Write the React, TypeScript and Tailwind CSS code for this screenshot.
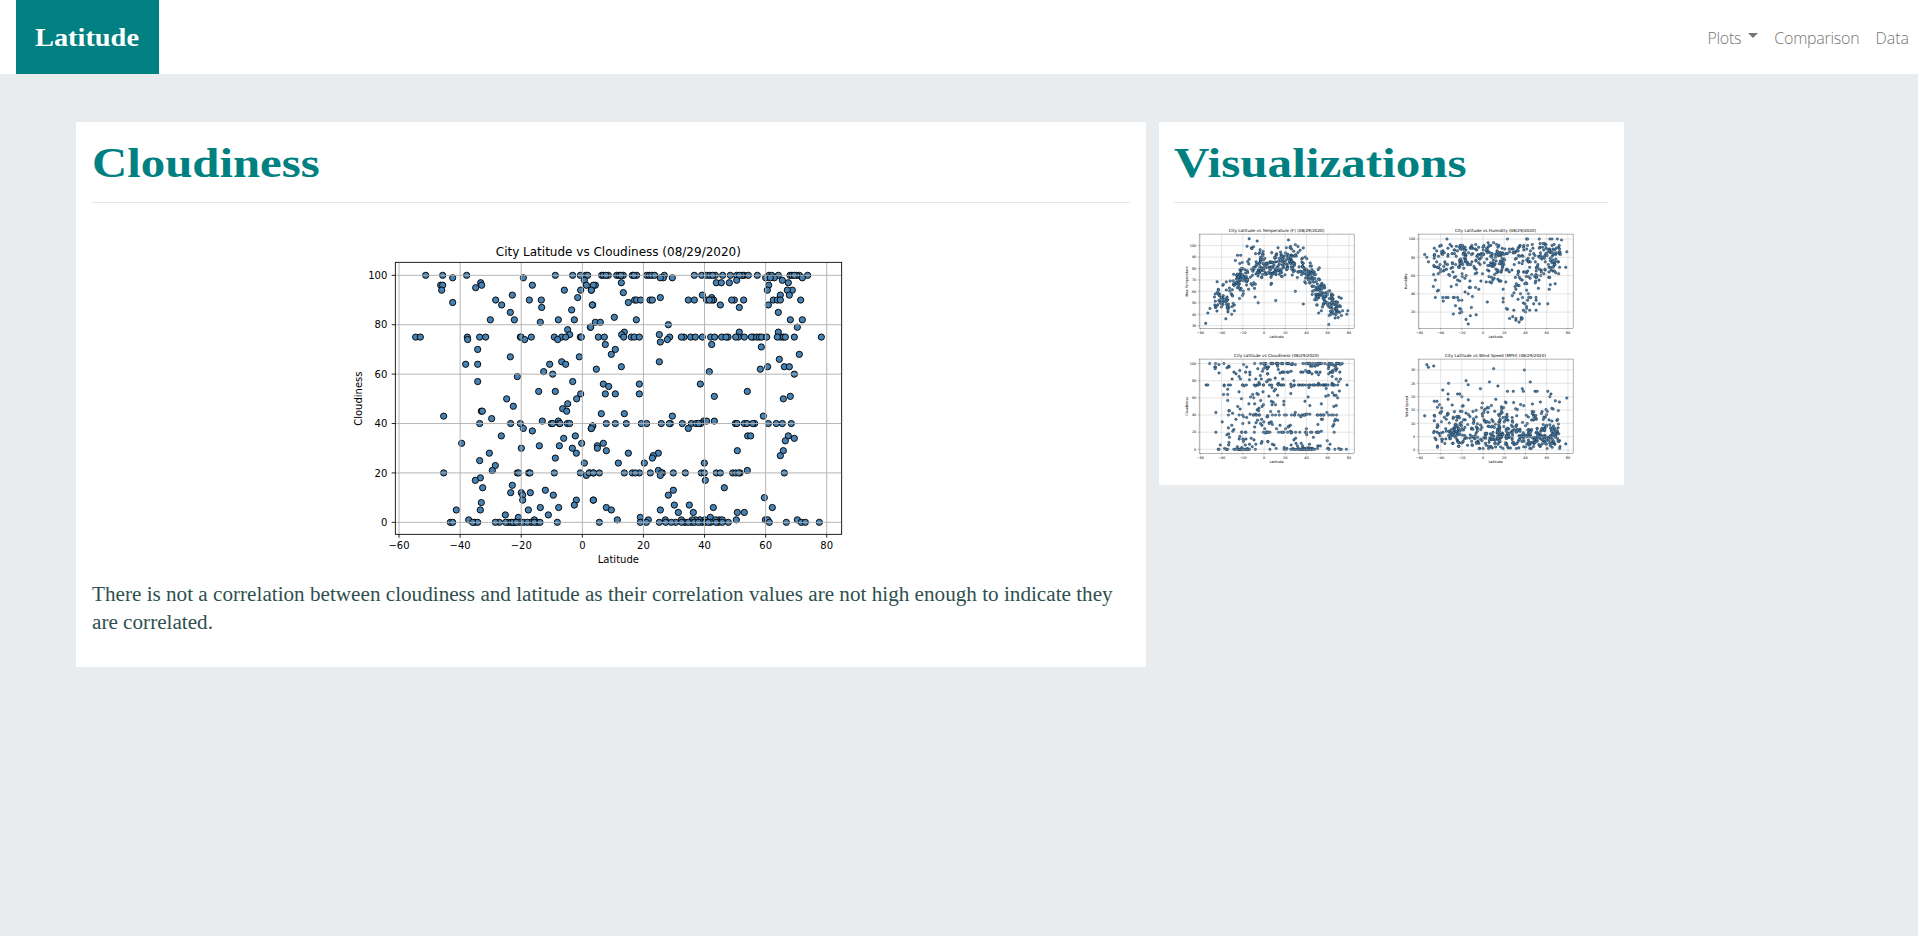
import React from "react";

type Point = [number, number];
type Row = [number, number[]];

/* Chart space is 1728 x 1080 units; the plot area is inset inside it. */
const PLOT = { left: 216, top: 130, right: 1555, bottom: 946 };
const latToX = (lat: number) => 778 + 9.165 * lat;
const X_TICKS = [-60, -40, -20, 0, 20, 40, 60, 80];

/* Cloudiness rows: [cloudiness, horizontal positions]. */
const SOUTH_ROWS: Row[] = [
  [100, [257, 308, 380, 646, 698, 721, 737, 743]],
  [99, [338, 550]], [98, [733]], [97, [422]],
  [96, [302, 308, 425, 577, 739]],
  [95, [407]], [94, [305, 673, 722, 754]],
  [92, [517]], [91, [713]], [90, [467, 568, 604]], [89, [338]], [88, [485, 758]],
  [87, [605]], [86, [695]], [85, [511]], [82, [451, 523, 655, 703]], [81, [601]],
  [79, [751]], [78, [683]], [76, [689]],
  [75, [227, 241, 382, 419, 437, 541, 543, 574, 643, 665, 677, 721, 724]],
  [74, [383, 554, 653]], [70, [413]], [67, [511, 718]], [65, [665]],
  [64, [377, 413, 629, 677]], [61, [611]], [60, [638]], [59, [532]],
  [57, [413, 698]], [53, [596, 646]], [52, [722]], [50, [500, 710]],
  [48, [683]], [47, [520]], [46, [668]], [45, [424, 427, 680]], [43, [311]],
  [42, [455]], [41, [607, 655]],
  [40, [419, 512, 541, 634, 638, 658, 660, 682, 689]],
  [39, [758]], [38, [550, 754]], [37, [577]], [35, [484, 706]], [34, [671]],
  [32, [365, 725]], [31, [598, 658]], [30, [544, 697]], [28, [448, 709]],
  [26, [646]], [25, [419]], [24, [733]], [23, [466]], [21, [457]],
  [20, [311, 532, 536, 566, 570, 643, 721, 748, 760]],
  [19, [739]], [18, [421]], [17, [406]], [15, [517]], [14, [428]], [13, [616]],
  [12, [512, 544, 571]], [11, [548, 640]], [9, [548, 709, 760]], [8, [424]],
  [7, [703]], [6, [601, 656]], [5, [349, 421, 565]], [3, [496, 625]],
  [2, [535]], [1, [386, 583]],
  [0, [331, 338, 404, 413, 398, 478, 466, 505, 497, 513, 524, 519, 540, 529, 550, 573, 562, 592, 583, 600, 652]],
];

const NORTH_ROWS: Row[] = [
  [100, [35, 55, 40, 48, 80, 87, 100, 93, 127, 140, 132, 170, 178, 185, 194, 223, 313, 335, 350, 360, 376, 368, 398, 421, 440, 462, 456, 448, 475, 502, 537, 545, 565, 600, 606, 628, 620, 613, 653]],
  [99, [220, 211, 247, 527, 553, 541, 637]],
  [98, [440, 577]], [97, [94, 379, 394, 418, 595]], [96, [16, 10, 536]],
  [94, [4, 532, 607, 592]], [93, [100]], [92, [337, 571, 598]], [91, [211, 365]],
  [90, [134, 140, 152, 180, 187, 295, 313, 350, 371, 365, 358, 433, 425, 461, 550, 562, 571, 632]],
  [89, [115]], [88, [7, 391, 535]], [87, [448]], [85, [565]], [83, [73]],
  [82, [139, 601, 637]], [81, [16, 31]], [80, [235]], [79, [2, 622]],
  [77, [103, 448, 565]], [76, [95, 208]],
  [75, [25, 43, 101, 124, 133, 148, 239, 282, 274, 302, 316, 337, 362, 374, 395, 414, 408, 445, 437, 463, 490, 484, 500, 508, 515, 530, 572, 580, 562, 586, 613, 694]],
  [74, [232]], [73, [211]], [72, [46, 365]], [71, [514]], [70, [76]],
  [68, [64, 628]], [66, [568]], [65, [208]], [63, [94, 533, 583, 598]],
  [62, [19, 511]], [61, [358]], [60, [613]], [56, [40, 148, 331]], [55, [56]],
  [53, [472]], [52, [46, 76, 148]], [51, [373, 601]], [50, [580]],
  [44, [34, 103]], [43, [247, 520]], [41, [341, 350, 373]],
  [40, [49, 76, 109, 154, 170, 214, 241, 238, 277, 304, 318, 332, 326, 436, 441, 463, 471, 494, 488, 535, 559, 577, 604]],
  [39, [8]], [38, [4, 295]], [35, [473, 482, 595]], [34, [613]], [33, [586]],
  [32, [40]], [31, [22]], [30, [22]], [29, [49, 442, 580]], [28, [115, 205]],
  [27, [190, 571]], [26, [187]], [24, [85, 163, 343]], [21, [205, 472]],
  [20, [-2, 10, 28, 103, 127, 148, 136, 181, 217, 214, 250, 286, 334, 343, 379, 391, 428, 437, 450, 446, 583]],
  [19, [211]], [17, [346]], [14, [403]], [13, [250]], [11, [235]], [10, [523]],
  [9, [10]], [7, [253, 298]], [6, [49, 370, 547]], [5, [64, 211]],
  [4, [265, 310, 442, 463]], [2, [151, 361]],
  [1, [82, 175, 226, 274, 330, 317, 307, 345, 388, 377, 397, 439, 526, 533, 622]],
  [0, [28, 151, 169, 208, 227, 257, 244, 285, 275, 305, 295, 313, 335, 325, 345, 362, 355, 385, 378, 397, 415, 538, 589, 634, 646, 688]],
];

const cloudiness: Point[] = [
  ...SOUTH_ROWS.flatMap(([v, xs]) => xs.map((x): Point => [(x + 51 - 778) / 9.165, v])),
  ...NORTH_ROWS.flatMap(([v, xs]) => xs.map((x): Point => [(x + 801 - 778) / 9.165, v])),
];

/* Deterministic generator so that the thumbnails never change between loads. */
function makeRandom(seed: number) {
  let s = seed;
  return () => {
    s = (s * 1664525 + 1013904223) % 4294967296;
    return s / 4294967296;
  };
}

const BANDS = [
  [0.09, -47, -30],
  [0.3, -30, -5],
  [0.58, -5, 27],
  [0.8, 27, 52],
  [1, 52, 73],
];

function sampleLat(r: () => number) {
  const pick = r();
  const band = BANDS.find((b) => pick <= b[0]) ?? BANDS[4];
  return band[1] + r() * (band[2] - band[1]);
}

const bell = (r: () => number) => (r() + r() + r() + r() - 2) * 1.73;

const TEMP_CURVE: Point[] = [
  [-60, 38], [-45, 52], [-34, 53], [-25, 68], [-15, 74], [-5, 80], [10, 81],
  [30, 84], [38, 81], [45, 69], [55, 57], [65, 48], [80, 41],
];

function curveAt(lat: number) {
  for (let i = 1; i < TEMP_CURVE.length; i++) {
    const [x1, y1] = TEMP_CURVE[i];
    const [x0, y0] = TEMP_CURVE[i - 1];
    if (lat <= x1) return y0 + ((lat - x0) / (x1 - x0)) * (y1 - y0);
  }
  return 41;
}

function build(seed: number, count: number, value: (lat: number, r: () => number) => number, fixed: Point[]): Point[] {
  const r = makeRandom(seed);
  const out: Point[] = [...fixed];
  for (let i = 0; i < count; i++) {
    const lat = sampleLat(r);
    out.push([lat, value(lat, r)]);
  }
  return out;
}

const temperature = build(
  11, 480,
  (lat, r) => Math.max(curveAt(lat) + bell(r) * (lat > 58 ? 5 : 6.8), lat > -8 && lat < 38 ? 72 + r() * 7 : 36),
  [
    [-55, 32], [-53, 41], [-51, 45], [-36, 36], [-30.5, 40], [-28, 43], [-28, 48], [-14, 106], [-6.5, 104],
    [-16, 99.5], [-12, 98], [-10, 99], [23, 105], [-25, 91.5], [-22, 91.5], [-27, 87], [-14, 88], [-4, 94],
    [-8, 93], [-8.5, 55], [-5.5, 50], [11, 52], [7, 67], [6.5, 66], [29.5, 60], [37, 49], [37, 98], [26, 97],
    [61, 31], [61.5, 39], [79, 43], [78, 40], [51, 79], [51.5, 41], [54, 43], [74, 43], [-34, 42], [-34, 44],
    [-33, 46], [-34, 48], [28, 95], [32, 94], [34, 96], [30, 92], [27, 91],
  ],
);

const humidity = build(
  29, 400,
  (lat, r) => {
    const low = lat > 24 && lat < 54 && r() < 0.45;
    const v = low ? 54 + bell(r) * 13 : 79 + bell(r) * 13;
    return Math.round(v > 96 ? 82 + r() * 12 : v);
  },
  [
    [-55, 83], [-53, 80], [-51.5, 75], [-46, 70], [-46, 82], [-46, 79], [-42, 81], [-39, 84], [-34, 100],
    [-45, 55], [-43, 43], [-42, 44], [-38, 36], [-37.5, 32], [-45, 36], [-35, 36], [-33, 36], [-28, 18],
    [-14, 7], [-16, 12], [-12, 16], [-6.5, 17], [4, 31], [19, 31], [19, 35], [19, 45], [25, 13], [28, 15],
    [31, 13], [31, 11], [34, 9], [36, 14], [36, 12], [37, 13], [50, 22], [50, 33], [61, 29], [33, 34],
    [29, 22], [23, 23], [22, 24], [38, 22], [40, 20], [41, 26], [44, 22], [74, 99], [79, 86], [78, 69],
    [23, 100], [41, 100], [42, 100], [53, 100], [63, 100], [65, 100], [70, 100], [-20, 33], [-11, 25],
    [-22, 19], [-22, 24], [-21, 23], [-20, 20], [-26, 27], [-10, 37], [-28, 36], [-27, 36], [-24, 36],
    [-23, 33], [-30, 48], [-25, 50], [-22, 54], [-14, 40], [-17, 42], [-7, 47], [-4, 45], [-2, 54],
    [-13, 47], [-24, 55], [3, 53], [8, 52], [14, 56], [16, 54], [38, 30], [42, 33], [45, 36], [41, 24],
  ],
);

const wind = build(
  53, 500,
  (lat, r) => {
    const v = r() < 0.5 ? 5 + bell(r) * 2.2 : 9.4 + bell(r) * 4.4;
    const shift = lat < -5 ? 1.2 : 0;
    return Math.min(Math.max(Math.abs(v) + shift, 0.6), 19.5);
  },
  [
    [-53, 32], [-51.5, 31], [-46.5, 31.5], [10, 30.5], [39, 30], [-16, 26], [-14, 24.5], [6, 25.5],
    [14, 24], [44.5, 25.5], [-32.5, 25], [-38, 22.5], [-2.5, 23], [37, 23], [23, 22], [28.5, 22],
    [38, 22], [49, 22], [51, 22], [61, 22], [64, 21], [79, 19.5], [78, 2.3], [-55, 12.8], [-46, 18.3],
    [-46, 13], [-46, 11], [-46, 7], [-41, 17], [-43, 16], [12, 19], [11, 14.5], [21, 18], [-22, 21],
    [-24, 21], [-20, 20], [-33, 21], [-33, 19], [63, 20], [72, 18], [54, 18], [-43, 1.5], [-43, 1], [-39, 4],
  ],
);

interface ChartProps {
  title: string;
  yLabel: string;
  points: Point[];
  ticks: number[];
  zeroY: number;
  unit: number;
  labelX?: number;
  radius?: number;
  className: string;
}

function minus(n: number) {
  return n < 0 ? `\u2212${-n}` : String(n);
}

function ScatterChart({ title, yLabel, points, ticks, zeroY, unit, labelX = 102, radius = 9.4, className }: ChartProps) {
  const toY = (v: number) => zeroY - v * unit;
  return (
    <svg viewBox="0 0 1728 1080" className={className} fontFamily='"DejaVu Sans", sans-serif' fontSize="30" fill="#000">
      <g fill="#4682b4" stroke="#000" strokeWidth="2.8">
        {points.map(([lat, v], i) => (
          <circle key={i} cx={latToX(lat)} cy={toY(v)} r={radius} />
        ))}
      </g>
      <g stroke="#b0b0b0" strokeWidth="2.8">
        {X_TICKS.map((t) => (
          <line key={t} x1={latToX(t)} x2={latToX(t)} y1={PLOT.top} y2={PLOT.bottom} />
        ))}
        {ticks.map((t) => (
          <line key={t} x1={PLOT.left} x2={PLOT.right} y1={toY(t)} y2={toY(t)} />
        ))}
      </g>
      <g stroke="#000" strokeWidth="2.6" fill="none">
        <rect x={PLOT.left + 1} y={PLOT.top} width={PLOT.right - PLOT.left} height={PLOT.bottom - PLOT.top} />
        {X_TICKS.map((t) => (
          <line key={t} x1={latToX(t)} x2={latToX(t)} y1={PLOT.bottom} y2={PLOT.bottom + 10} />
        ))}
        {ticks.map((t) => (
          <line key={t} x1={PLOT.left - 10} x2={PLOT.left} y1={toY(t)} y2={toY(t)} />
        ))}
      </g>
      <g textAnchor="middle">
        <text x="886" y="111" fontSize="36">{title}</text>
        {X_TICKS.map((t) => (
          <text key={t} x={latToX(t)} y="990">{minus(t)}</text>
        ))}
        <text x="886" y="1031">Latitude</text>
        <text transform={`translate(${labelX + 15} 539) rotate(-90)`}>{yLabel}</text>
      </g>
      <g textAnchor="end">
        {ticks.map((t) => (
          <text key={t} x="193" y={toY(t) + 11}>{t}</text>
        ))}
      </g>
    </svg>
  );
}

const HUNDREDS = [0, 20, 40, 60, 80, 100];
const cloudProps = {
  title: "City Latitude vs Cloudiness (08/29/2020)",
  yLabel: "Cloudiness",
  points: cloudiness,
  ticks: HUNDREDS,
  zeroY: 910,
  unit: 7.41,
};

const THUMB = "h-[125px] w-[200px]";

export default function App() {
  return (
    <div className="min-h-screen bg-[#e8ecef] font-['Liberation_Serif',serif]">
      <nav className="flex h-[74px] items-stretch justify-between bg-white pr-[9px] pl-4">
        <a href="#" className="flex w-[143px] items-center bg-[#008080] pt-px pl-[19px] text-[25px] font-bold text-white">
          <span className="inline-block origin-left scale-x-[1.134]">Latitude</span>
        </a>
        <div className="flex items-center gap-4 pt-px font-['Open_Sans',sans-serif] text-[16px] font-light tracking-[-0.25px] text-[#767676]">
          <a href="#" className="flex items-center gap-[7px]">
            Plots
            <span className="mb-1 h-0 w-0 border-x-[5px] border-t-[5px] border-x-transparent border-t-[#767676]" />
          </a>
          <a href="#">Comparison</a>
          <a href="#" className="tracking-normal">Data</a>
        </div>
      </nav>
      <main className="flex items-start gap-[13px] pt-12 pl-[76px]">
        <section className="h-[545px] w-[1070px] bg-white px-4 pt-[17px]">
          <h1 className="h-[47px] text-[42px] leading-[48px] font-bold text-[#008080]">
            <span className="inline-block origin-left scale-x-[1.161]">Cloudiness</span>
          </h1>
          <hr className="mt-4 border-t border-[#e5e5e5]" />
          <ScatterChart {...cloudProps} className="mx-auto mt-4 h-[360px] w-[576px]" />
          <p className="w-[980px] origin-left scale-x-[1.058] pt-px text-[20px] leading-[28px] text-[#2f4f4f]">
            There is not a correlation between cloudiness and latitude as their correlation values are not high enough to
            indicate they are correlated.
          </p>
        </section>
        <section className="h-[363px] w-[465px] bg-white pt-[17px] pr-4 pl-[15px]">
          <h1 className="h-[47px] text-[42px] leading-[48px] font-bold text-[#008080]">
            <span className="inline-block origin-left scale-x-[1.168]">Visualizations</span>
          </h1>
          <hr className="mt-4 border-t border-[#e5e5e5]" />
          <div className="mt-4 grid grid-cols-[219px_200px]">
            <ScatterChart
              title="City Latitude vs Temperature (F) (08/29/2020)"
              yLabel="Max Temperature"
              points={temperature}
              ticks={[30, 40, 50, 60, 70, 80, 90, 100]}
              zeroY={1218}
              unit={9.88}
              radius={11}
              className={THUMB}
            />
            <ScatterChart
              title="City Latitude vs Humidity (08/29/2020)"
              yLabel="Humidity"
              points={humidity}
              ticks={[20, 40, 60, 80, 100]}
              zeroY={962}
              unit={7.89}
              radius={11}
              className={THUMB}
            />
            <ScatterChart {...cloudProps} radius={11} className={THUMB} />
            <ScatterChart
              title="City Latitude vs Wind Speed (MPH) (08/29/2020)"
              yLabel="Wind Speed"
              points={wind}
              ticks={[0, 5, 10, 15, 20, 25, 30]}
              zeroY={916}
              unit={23.05}
              labelX={118}
              radius={11}
              className={THUMB}
            />
          </div>
        </section>
      </main>
    </div>
  );
}
